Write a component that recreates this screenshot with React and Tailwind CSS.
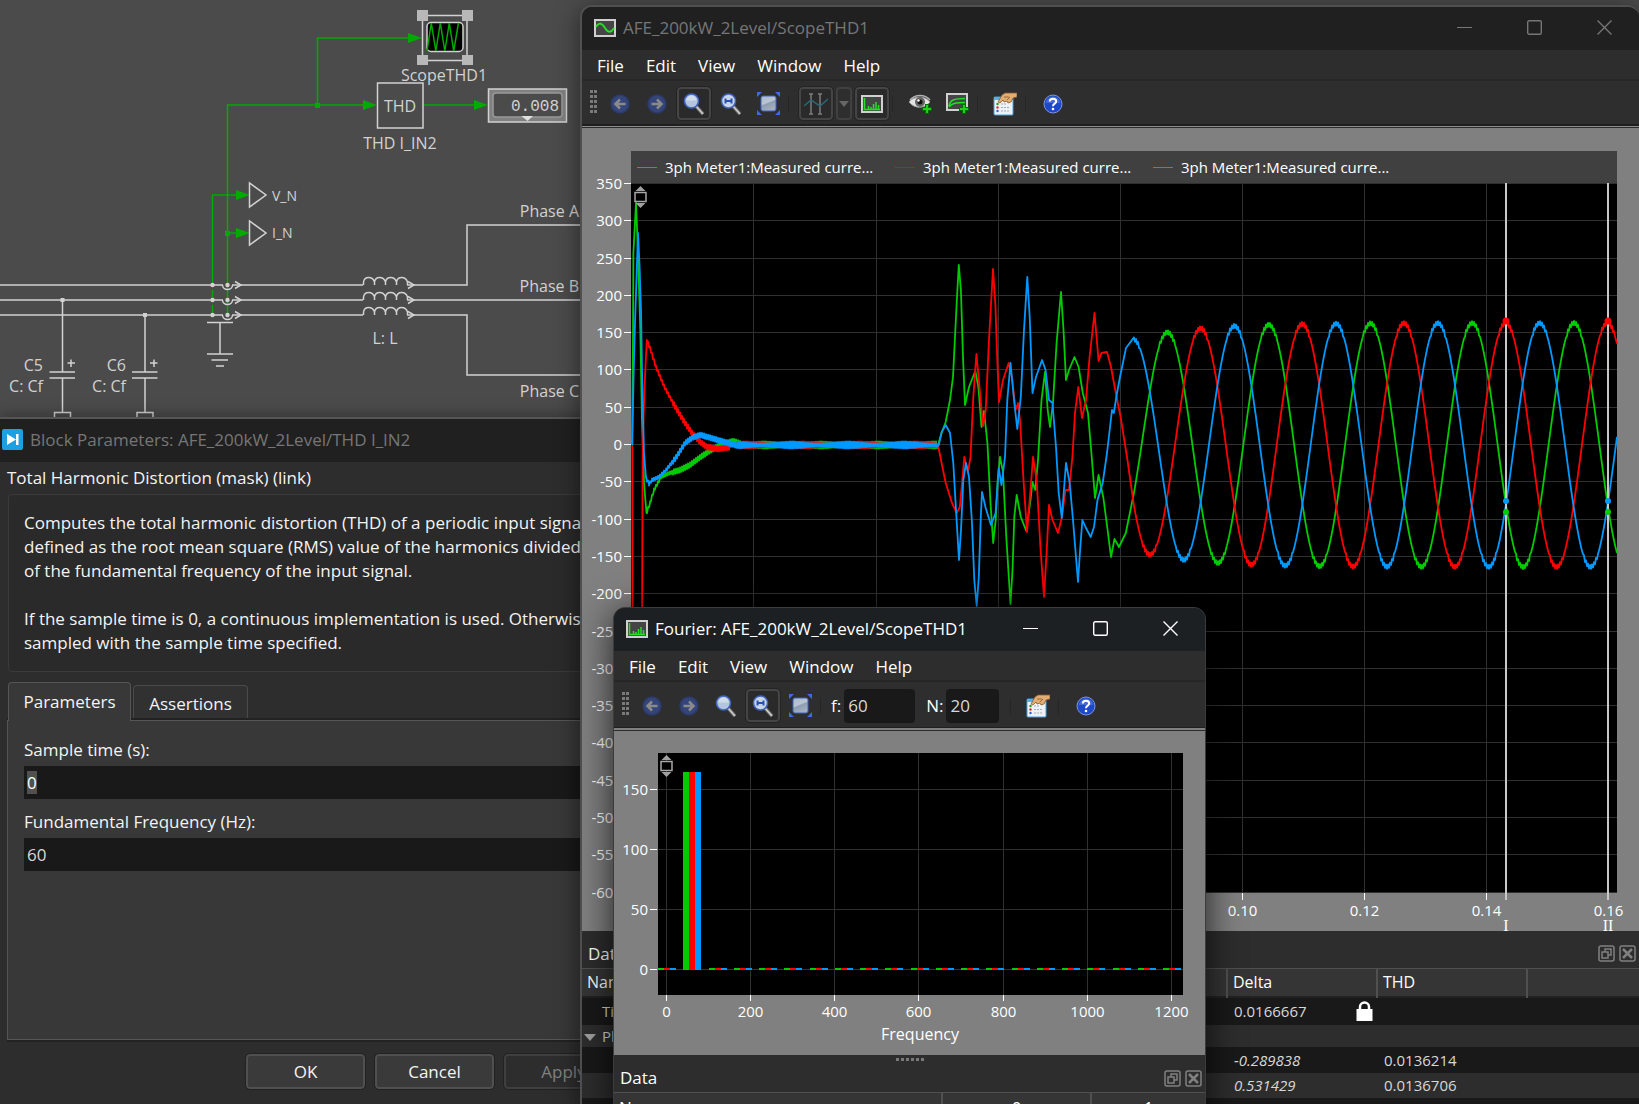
import React, { useEffect, useRef } from 'react';

const GREEN = '#00cc00';
const RED = '#ff0000';
const BLUE = '#0099ff';

// start-up and load step transients, x y pairs
const TRANSIENTS = {
    green: '632 444 633 340 633.4 253 636 203 638 253 640.3 330 642 420 644 483 646.5 513 650 503 654 490 661 477 669.5 473 680 470 690 465 700.5 457 711 450 721 445 733 441 742 444|938 445 941.6 433 945.7 422 950 400 953 377 954.7 343 956.7 303 958.8 265 960.9 290 963 357 965 405 969 387 975.3 371 978.4 387 981.5 427 984 411 987.4 443 990.5 503 993.2 543 995.7 520 997.7 480 1000 457 1003 472 1006.3 537 1010.5 604 1012.5 570 1014.3 517 1016.7 495 1020.8 517 1026.3 531 1030.5 500 1032.5 482 1035.3 490 1038 460 1041.5 400 1045 372 1047.7 410 1050 427 1053 403 1056.6 343 1061 292 1063.5 330 1066 380 1069 370 1074.5 357 1078.6 367 1082.8 393 1088 413 1091.4 453 1095 498 1098.6 475 1103.4 498 1107.6 530 1111 557 1114.5 539 1119 547 1125.8 533',
    red: '632.3 445 632.5 640 638 900 642 640 642.7 443 644.7 383 646.8 340 650 348 656 367 664.4 387 673 403 683 420 692 433 699 441 707 447 718 449 731 447|938 445 941.6 463 945.7 483 952 503 956.7 513 959.8 507 962.3 480 964.3 457 968 472 970.5 457 973.3 397 976.4 354 979.5 387 983 426 985.7 410 989 340 993 269 995.3 303 997.4 363 999 402 1003 380 1008.7 363 1012 377 1015.6 410 1018 403 1020 420 1023.5 480 1027 532 1030.5 490 1033 457 1036.7 480 1040.4 547 1044 597 1046.6 553 1049 505 1052.5 520 1058 533 1062 517 1065.5 490 1069 490 1072.4 457 1075 413 1078.3 387 1082 418 1086 400 1089.6 357 1094.5 313 1098.6 361 1101.4 353 1107 352 1111 367 1115.8 393 1120.6 417 1127 457',
    blue: '632.3 445 633.4 383 635 323 638 233 639.6 267 641 310 642 370 644 453 646 478 649 484 652 480 659 477 666 470 676.4 457 685 443 693.6 437 700.5 435 711 438 724.6 442 738.4 446|938.8 445 941.6 432 945.7 425 950 433 953.3 463 956 510 959 560 961 530 963.3 480 966 463 969 477 972 523 974.3 580 976.7 606 978.8 577 980.8 517 982 492 985.7 508 991 525 995.6 513 998.7 468 1001.5 485 1005 457 1007.3 400 1010.5 363 1014 400 1017.3 429 1020.8 397 1024 330 1027.3 277 1029.7 317 1032.5 393 1036 377 1042 360 1045.6 370 1049 400 1052.5 403 1056 447 1058.7 493 1061.8 518 1066 463 1069.7 483 1073 520 1078 582 1080.3 547 1082.4 520 1085.5 527 1090.7 537 1094 527 1097.5 500 1102.7 483 1107 453 1112 410 1113.8 413 1117 393 1120 377 1126 348',
};

const PEAKS = { green: 1167, red: 1200.4, blue: 1132.6 };
const PERIOD = 101.75;

// switching ripple on the settling part, one sample per pixel
const addRipple = (text) => {
    const n = text.split(' ').map(Number);
    const out = [];
    for (let i = 0; i + 1 < n.length; i += 2) {
        const [x, y, nx, ny] = n.slice(i, i + 4);
        out.push(`${x} ${y}`);
        if (x < 646 || nx === undefined) continue;
        for (let px = Math.ceil(x); px < nx; px += 1) {
            const mid = y + ((ny - y) * (px - x)) / (nx - x);
            const ripple = px > 672 ? 2.5 : 1.5;
            out.push(`${px} ${(mid + (px % 2 ? ripple : -ripple)).toFixed(1)}`);
        }
    }
    return out.join(' ');
};

const buildWave = (name) => {
    const [start, step] = TRANSIENTS[name].split('|');
    const idle = [];
    for (let x = 738; x < 938; x += 1) {
        const swell = 2.5 + Math.sin(x / 9 + PEAKS[name]);
        idle.push(`${x} ${(445 + (x % 2 ? swell : -swell)).toFixed(1)}`);
    }
    const steady = [];
    for (let x = 1134; x <= 1617; x += 1) {
        const c = Math.cos((2 * Math.PI * (x - PEAKS[name])) / PERIOD);
        const amp = 122 - 16 * Math.exp(-(x - 1134) / 60);
        const ripple = Math.abs(c) > 0.9 ? 2 : 0;
        steady.push(`${x} ${(445 - amp * c + (x % 2 ? ripple : -ripple)).toFixed(1)}`);
    }
    return `${addRipple(start)} ${idle.join(' ')} ${step} ${steady.join(' ')}`;
};

const WAVES = [
    { name: 'green', color: GREEN, points: buildWave('green') },
    { name: 'red', color: RED, points: buildWave('red') },
    { name: 'blue', color: BLUE, points: buildWave('blue') },
];

/* ---------- icons ---------- */

const ScopeIcon = () => (
    <svg width="22" height="18" viewBox="0 0 22 18">
        <rect x="1" y="1" width="20" height="16" fill="#454545" stroke="#d0d0d0" strokeWidth="2" />
        <path d="M2 8C5 3 8 4 11 9S17 14 20 9" fill="none" stroke="#22e022" strokeWidth="1.800" />
    </svg>
);

const SpectrumIcon = () => (
    <svg width="22" height="18" viewBox="0 0 22 18">
        <rect x="1" y="1" width="20" height="16" fill="#454545" stroke="#d0d0d0" strokeWidth="2" />
        <path d="M3.500 3V14.500H19M7.500 14V11M10 14V12M12.500 14V9M15 14V7M17.500 14V10" fill="none" stroke="#22e022" strokeWidth="1.500" />
    </svg>
);

const ArrowIcon = ({ flip }) => (
    <svg width="20" height="20" viewBox="0 0 20 20">
        <circle cx="10" cy="10" r="9" fill="#35457a" stroke="#2c3a68" strokeWidth="1.500" />
        <path
            d={flip ? 'M4.500 10H14M10 5.500L14.500 10L10 14.500' : 'M15.500 10H6M10 5.500L5.500 10L10 14.500'}
            fill="none"
            stroke="#8a8a8a"
            strokeWidth="2.500"
        />
    </svg>
);

const ZoomIcon = ({ range }) => (
    <svg width="22" height="24" viewBox="0 0 22 24">
        <path d="M13 14L20 22" stroke="#6a6a6a" strokeWidth="3.500" />
        <path d="M12.500 13.500L20 22" stroke="#d0d0d0" strokeWidth="1.600" />
        <circle cx="8.500" cy="9" r="7" fill={range ? '#c9d6e8' : '#b4c6dc'} stroke="#3f63bb" strokeWidth="1.600" />
        {range ? (
            <path d="M5.500 6.500V11.500M11.500 6.500V11.500M5.500 9H11.500" stroke="#2850b4" strokeWidth="2" />
        ) : (
            <path d="M3.500 8.500A5 5 0 0 1 13.500 8.500Z" fill="#d0dcea" />
        )}
    </svg>
);

const FitIcon = () => (
    <svg width="23" height="23" viewBox="0 0 23 23" className="shrink-0">
        <defs>
            <linearGradient id="fit" x1="0" y1="0" x2="0.400" y2="1">
                <stop offset="0" stopColor="#a9b8cc" />
                <stop offset="0.500" stopColor="#bcc6d2" />
                <stop offset="0.600" stopColor="#8f9db2" />
                <stop offset="1" stopColor="#a4b0c0" />
            </linearGradient>
        </defs>
        <rect x="4" y="4" width="15" height="15" rx="2" fill="url(#fit)" stroke="#3f63bb" />
        <path d="M0 0H5L0 5ZM23 0H18L23 5ZM0 23H5L0 18ZM23 23H18L23 18Z" fill="#3d6be8" />
    </svg>
);

const CursorsIcon = () => (
    <svg width="24" height="22" viewBox="0 0 24 22">
        <path d="M5 1H9M5 21H9M7 1V21M14 1H18M14 21H18M16 1V21" stroke="#7d7d7d" strokeWidth="1.500" fill="none" />
        <path d="M0 13L7 7L16 13L24 6" stroke="#2b6674" strokeWidth="1.500" fill="none" />
    </svg>
);

const EyeIcon = () => (
    <svg width="25" height="20" viewBox="0 0 25 20">
        <path d="M1 8C5 2 17 1 22 8C17 15 6 15 1 8Z" fill="#e4e4e4" stroke="#9a9a9a" />
        <path d="M2 6C7 0 17 0 22 6" stroke="#b0b0b0" strokeWidth="1.500" fill="none" />
        <circle cx="12" cy="8" r="5" fill="#666" />
        <circle cx="12" cy="8" r="2.500" fill="#111" />
        <circle cx="10.500" cy="6.500" r="1.200" fill="#fff" />
        <path d="M19 10V20M14 15H24" stroke="#046a04" strokeWidth="4" />
        <path d="M19 11V19M15 15H23" stroke="#1fd01f" strokeWidth="2" />
    </svg>
);

const AddTraceIcon = () => (
    <svg width="23" height="21" viewBox="0 0 23 21">
        <rect x="1" y="1" width="20" height="16" fill="#454545" stroke="#d0d0d0" strokeWidth="2" />
        <path d="M3 13C4 7 8 5.500 19 5.500M3 14C6 10 10 9.500 19 9.500" fill="none" stroke="#22e022" strokeWidth="1.500" />
        <path d="M18 11V21M13 16H23" stroke="#046a04" strokeWidth="4" />
        <path d="M18 12V20M14 16H22" stroke="#1fd01f" strokeWidth="2" />
    </svg>
);

const PropertiesIcon = () => (
    <svg width="24" height="24" viewBox="0 0 24 24">
        <rect x="1" y="5" width="19" height="18" rx="1" fill="#eef2f6" stroke="#4aa0d8" />
        <rect x="1" y="5" width="19" height="3" fill="#59aee4" />
        <circle cx="4.500" cy="12" r="1.200" fill="#1b9c1b" />
        <circle cx="4.500" cy="15.500" r="1.200" fill="#d83030" />
        <circle cx="4.500" cy="19" r="1.200" fill="#3060d8" />
        <path d="M8 12H13M8 15.500H17M8 19H16" stroke="#a5adb8" strokeDasharray="2 1" />
        <path d="M5 10L9 3L12 1H20L24 1V5L20 6L18 10L15 11L14 9L11 10L10 8L7 11Z" fill="#e0ad74" stroke="#8a5a2c" strokeWidth="0.800" />
        <path d="M11 5H16M14 8L17 5" stroke="#8a5a2c" strokeWidth="0.800" />
    </svg>
);

const HelpIcon = () => (
    <svg width="20" height="20" viewBox="0 0 20 20">
        <circle cx="10" cy="10" r="9" fill="#1d49c8" stroke="#7f96dc" strokeWidth="1" />
        <path d="M3 9A7 6.500 0 0 1 17 9Z" fill="#5578dc" opacity="0.700" />
        <path d="M6.800 7.500C6.800 3.800 13.200 3.800 13.200 7.500C13.200 9.800 10 9.600 10 12.200" fill="none" stroke="#fff" strokeWidth="2" />
        <circle cx="10" cy="15" r="1.300" fill="#fff" />
    </svg>
);

const FloatIcon = () => (
    <svg width="17" height="17" viewBox="0 0 17 17" fill="none" stroke="#808080" strokeWidth="1.500">
        <rect x="1" y="1" width="15" height="15" rx="2" />
        <rect x="4" y="7" width="6" height="6" />
        <path d="M7 7V4H13V10H10" />
    </svg>
);

const DockCloseIcon = () => (
    <svg width="17" height="17" viewBox="0 0 17 17" fill="none" stroke="#808080" strokeWidth="1.500">
        <rect x="1" y="1" width="15" height="15" rx="2" />
        <path d="M4 4L13 13M13 4L4 13" strokeWidth="2.500" />
    </svg>
);

/* ---------- shared window parts ---------- */

const TitleBar = ({ icon, title, className }) => (
    <div className={`flex h-[43px] shrink-0 items-center pb-[2px] pl-3 ${className}`}>
        {icon}
        <span className="ml-[7px] grow whitespace-nowrap">{title}</span>
        <button aria-label="Minimize" className="flex h-full w-[70px] items-center justify-center">
            <svg width="15" height="15"><path d="M0 7.500H15" stroke="currentColor" /></svg>
        </button>
        <button aria-label="Maximize" className="flex h-full w-[70px] items-center justify-center">
            <svg width="15" height="15"><rect x="0.700" y="0.700" width="13.600" height="13.600" rx="1.500" fill="none" stroke="currentColor" strokeWidth="1.400" /></svg>
        </button>
        <button aria-label="Close" className="flex h-full w-[70px] items-center justify-center">
            <svg width="15" height="15"><path d="M0.500 0.500L14.500 14.500M14.500 0.500L0.500 14.500" stroke="currentColor" strokeWidth="1.400" /></svg>
        </button>
    </div>
);

const MenuBar = () => (
    <div className="flex h-[31px] shrink-0 items-center gap-[22px] border-b-2 border-[#272727] bg-[#2d2d2d] pt-[2px] pl-[15px] text-white">
        {['File', 'Edit', 'View', 'Window', 'Help'].map((item) => (
            <button key={item}>{item}</button>
        ))}
    </div>
);

const Grip = () => (
    <svg width="8" height="27" className="mr-[2px] shrink-0" fill="#7a7a7a">
        {[0, 5, 10, 15, 20].map((y) => (
            <path key={y} d={`M0 ${y}h3v3h-3zM4 ${y}h3v3h-3z`} />
        ))}
    </svg>
);

const ToolButton = ({ label, active, children }) => (
    <button
        aria-label={label}
        className={`flex h-[33px] w-[34px] shrink-0 items-center justify-center rounded-sm border-2 ${active ? 'border-[#454545] bg-[#2a2a2a] outline outline-[#242424]' : 'border-transparent'}`}
    >
        {children}
    </button>
);

const Separator = () => <div className="h-4 w-2 shrink-0 border-l border-[#262626]" />;

const DockTitle = ({ className }) => (
    <div className={`flex shrink-0 items-center bg-[#2d2d2d] pl-[6px] text-white ${className}`}>
        <span className="grow">Data</span>
        <button aria-label="Float panel" className="mr-1"><FloatIcon /></button>
        <button aria-label="Close panel" className="mr-[3px]"><DockCloseIcon /></button>
    </div>
);

const ZoomHandle = ({ x, y }) => (
    <g transform={`translate(${x} ${y})`}>
        <path d="M-5 -6L0 -11L5 -6ZM-5 6L0 11L5 6Z" fill="#a0a0a0" />
        <rect x="-5.500" y="-4.500" width="11" height="9" fill="#000" stroke="#a8a8a8" strokeWidth="1.500" />
    </g>
);

/* ---------- schematic editor ---------- */

const Schematic = () => (
    <svg width="660" height="420" className="block" fontSize="16" fill="none" stroke="#d2d2d2" strokeWidth="1.500">
        <g stroke="#00aa00">
            <path d="M227.500 315V105H364M317.500 105V38H409M423 105H475M212.500 285V195H237M227.500 233H237" />
            <path d="M212.500 290V315" strokeDasharray="9 6" />
            <g fill="#00aa00" stroke="none">
                <path d="M363 100L377 105L363 110ZM408 33L422 38L408 43ZM474 100L488 105L474 110ZM236 190L250 195L236 200ZM236 228L250 233L236 238Z" />
                <path d="M315 103h5v5h-5zM225 231h5v5h-5z" />
            </g>
        </g>
        <path d="M0 285H363M0 300H363M0 315H363" />
        <path d="M407 285H467V225H590M407 300H590M407 315H467V375H590" />
        {[285, 300, 315].map((y) => (
            <g key={y}>
                <path d={`M363.500 ${y}v-3c1-6 9-6 11 0v3v-3c1-6 9-6 11 0v3v-3c1-6 9-6 11 0v3v-3c1-6 9-6 11 0v3`} />
                <path d={`M408 ${y - 3.5}L414 ${y}L408 ${y + 3.5}M235 ${y - 3.5}L241 ${y}L235 ${y + 3.5}`} />
                <path d={`M223 ${y}H232`} stroke="#4b4b4b" strokeWidth="3" />
                <path d={`M222.500 ${y}A5 4.500 0 0 0 232.500 ${y}`} />
                <circle cx="212.500" cy={y} r="2.200" fill="#d2d2d2" stroke="none" />
                <circle cx="227.500" cy={y} r="2.200" fill="#d2d2d2" stroke="none" />
            </g>
        ))}
        <path d="M207 322.500H233M220 322V354M207 354H233M211.500 360H228M216 366H224" />
        <path d="M249.500 183V207L266 195ZM249.500 221V245L266 233Z" />
        <path d="M62.500 300V372M49.500 372H75M49.500 378H75M62.500 378V412M54.500 420V412.500H70.500V420" />
        <path d="M145 315V372M132 372H157.500M132 378H157.500M145 378V412M137 420V412.500H153V420" />
        <path d="M60.500 298h4v4h-4zM143 313h4v4h-4z" fill="#d2d2d2" stroke="none" />
        <path d="M67.500 363H75M71 359.500V367M150 363H157.500M154 359.500V367" />
        <rect x="377.500" y="83" width="45.500" height="45" />
        <rect x="488.500" y="89" width="78" height="33" fill="#808080" />
        <rect x="493" y="93" width="69" height="24" rx="3" fill="#4b4b4b" stroke="#999" />
        <path d="M521.500 116H533L527.500 121Z" fill="#e0e0e0" stroke="none" />
        <rect x="422.500" y="15.500" width="44.500" height="45" />
        <path d="M417 10h11v11h-11zM462 10h11v11h-11zM417 55h11v10h-11zM462 55h11v10h-11z" fill="#b8b8b8" stroke="none" />
        <rect x="427" y="22.500" width="36" height="29" rx="4" fill="#000" />
        <path d="M427 51L431.300 23L435.800 51L440.300 23L444.800 51L449.300 23L453.700 51L458.500 23" stroke="#00aa00" />
        <g fill="#d2d2d2" stroke="none">
            <text x="444" y="81" textAnchor="middle">ScopeTHD1</text>
            <text x="400" y="112" textAnchor="middle">THD</text>
            <text x="400" y="149" textAnchor="middle">THD I_IN2</text>
            <text x="559" y="111" textAnchor="end" fontFamily="Liberation Mono, monospace">0.008</text>
            <text x="272" y="201" fontSize="14">V_N</text>
            <text x="272" y="238" fontSize="14">I_N</text>
            <text x="579" y="217" textAnchor="end">Phase A</text>
            <text x="579" y="292" textAnchor="end">Phase B</text>
            <text x="579" y="397" textAnchor="end">Phase C</text>
            <text x="385" y="344" textAnchor="middle">L: L</text>
            <text x="43" y="371" textAnchor="end">C5</text>
            <text x="43" y="392" textAnchor="end">C: Cf</text>
            <text x="126" y="371" textAnchor="end">C6</text>
            <text x="126" y="392" textAnchor="end">C: Cf</text>
        </g>
    </svg>
);

/* ---------- block parameters dialog ---------- */

const dialogButton = 'h-[35px] w-[119px] rounded-sm border-2 outline outline-[#222]';

const BlockParameters = () => {
    const sampleTime = useRef(null);

    useEffect(() => {
        sampleTime.current.focus();
        sampleTime.current.select();
    }, []);

    return (
        <section className="absolute top-[417px] bottom-0 left-0 flex w-[635px] flex-col border-t-2 border-[#555] bg-[#2d2d2d] text-[#f4f4f4] shadow-[0_0_16px_rgba(0,0,0,0.4)]">
            <div className="flex h-[43px] shrink-0 items-center bg-[#202020] pb-[2px] pl-[2px] text-[#767676]">
                <svg width="21" height="21">
                    <rect width="21" height="21" rx="2" fill="#1ba1e2" />
                    <path d="M5 5L14 10.500L5 16ZM14 5H16.500V16H14Z" fill="#fff" />
                </svg>
                <span className="ml-[7px] whitespace-nowrap">Block Parameters: AFE_200kW_2Level/THD I_IN2</span>
            </div>
            <h2 className="mt-1 ml-[7px]">Total Harmonic Distortion (mask) (link)</h2>
            <div className="mt-1 ml-2 h-[178px] shrink-0 rounded-sm border border-[#3a3a3a] bg-[#2a2a2a] px-[15px] pt-4 whitespace-nowrap">
                <p>Computes the total harmonic distortion (THD) of a periodic input signal</p>
                <p>defined as the root mean square (RMS) value of the harmonics divided</p>
                <p>of the fundamental frequency of the input signal.</p>
                <p className="mt-6">If the sample time is 0, a continuous implementation is used. Otherwise</p>
                <p>sampled with the sample time specified.</p>
            </div>
            <div className="mt-[10px] ml-2 flex shrink-0 items-end" role="tablist">
                <button role="tab" aria-selected="true" className="z-10 -mb-px h-[39px] w-[123px] rounded-t-sm border border-b-0 border-[#555] bg-[#383838]">Parameters</button>
                <button role="tab" className="ml-[2px] h-[35px] w-[115px] rounded-t-sm border border-b-0 border-[#4a4a4a] bg-[#313131] pt-[2px]">Assertions</button>
            </div>
            <div className="ml-[7px] flex h-[320px] shrink-0 flex-col border border-r-0 border-[#555] bg-[#383838] pt-[17px] pl-4 shadow-[0_-2px_0_#222,0_2px_0_#222]">
                <label htmlFor="sample">Sample time (s):</label>
                <input
                    id="sample"
                    ref={sampleTime}
                    defaultValue="0"
                    className="mt-1 h-[33px] bg-[#191919] px-[3px] outline-none selection:bg-[#505050] selection:text-white"
                />
                <label htmlFor="fundamental" className="mt-[11px]">Fundamental Frequency (Hz):</label>
                <input id="fundamental" defaultValue="60" className="mt-1 h-[33px] bg-[#191919] px-[3px] text-[#d8d8d8] outline-none" />
            </div>
            <div className="mt-[14px] flex justify-end gap-[10px] pr-3">
                <button className={`${dialogButton} border-[#505050] bg-[#3a3a3a]`}>OK</button>
                <button className={`${dialogButton} border-[#505050] bg-[#3a3a3a]`}>Cancel</button>
                <button disabled className={`${dialogButton} border-[#3f3f3f] bg-[#2d2d2d] text-[#808080]`}>Apply</button>
            </div>
        </section>
    );
};

/* ---------- scope ---------- */

const Y_TICKS = Array.from({ length: 20 }, (_, i) => 350 - i * 50);
const X_TICKS = [0.02, 0.04, 0.06, 0.08, 0.1, 0.12, 0.14, 0.16];
const scopeY = (v) => Math.round(445 - v * 0.746) - 0.5;
const scopeX = (t) => Math.round(631.3 + t * 6105) + 0.5;

const ScopePlot = () => (
    <svg viewBox="582 183 1057 748" className="block w-full overflow-visible" fontSize="15" fill="#fff">
        <rect x="631" y="183" width="986" height="710" fill="#000" />
        <g stroke="#303030" shapeRendering="crispEdges">
            {Y_TICKS.map((v) => <path key={v} d={`M631 ${scopeY(v)}H1617`} />)}
            {X_TICKS.slice(0, 7).map((t) => <path key={t} d={`M${scopeX(t)} 183V892`} />)}
        </g>
        <g fill="none" strokeWidth="1.800" strokeLinejoin="round">
            {WAVES.map((w) => <polyline key={w.name} points={w.points} stroke={w.color} />)}
        </g>
        <g stroke="#fff">
            {Y_TICKS.map((v) => <path key={v} d={`M624 ${scopeY(v)}H631`} />)}
            {X_TICKS.map((t) => <path key={t} d={`M${scopeX(t)} 893V900`} />)}
        </g>
        {Y_TICKS.map((v) => <text key={v} x="622" y={scopeY(v) + 5.5} textAnchor="end">{v}</text>)}
        {X_TICKS.map((t) => <text key={t} x={scopeX(t)} y="916" textAnchor="middle">{t.toFixed(2)}</text>)}
        {[1506, 1608].map((x) => (
            <g key={x}>
                <path d={`M${x} 183V900`} stroke="#c8c8c8" strokeWidth="2" />
                <circle cx={x} cy="321" r="3.500" fill={RED} />
                <circle cx={x} cy="501" r="3" fill={BLUE} />
                <circle cx={x} cy="512" r="3" fill={GREEN} />
            </g>
        ))}
        <g fontFamily="Liberation Serif, serif" fontSize="16" textAnchor="middle">
            <text x="1506" y="931">I</text>
            <text x="1608" y="931">II</text>
        </g>
        <ZoomHandle x={640.5} y={197} />
    </svg>
);

const Lock = () => (
    <svg width="17" height="20">
        <path d="M4 9V6A4.500 4.500 0 0 1 13 6V9" fill="none" stroke="#fff" strokeWidth="2.500" />
        <rect x="0.500" y="8" width="16" height="12" fill="#fff" />
    </svg>
);

const headCell = 'border-r-2 border-[#505050] p-0 pl-[5px] text-left font-normal';

const ScopeWindow = () => (
    <section className="absolute top-[5px] right-0 -bottom-1 left-[580px] flex flex-col overflow-hidden rounded-t-xl border-t-2 border-l-2 border-[#505050] bg-[#191919] shadow-[0_4px_24px_rgba(0,0,0,0.5)]">
        <TitleBar icon={<ScopeIcon />} title="AFE_200kW_2Level/ScopeTHD1" className="bg-[#202020] text-[#767676]" />
        <MenuBar />
        <div className="flex h-[43px] shrink-0 items-center gap-[3px] bg-[#2e2e2e] pt-[2px] pl-2">
            <Grip />
            <ToolButton label="Back"><ArrowIcon /></ToolButton>
            <ToolButton label="Forward"><ArrowIcon flip /></ToolButton>
            <ToolButton label="Free zoom" active><ZoomIcon /></ToolButton>
            <ToolButton label="Constrained zoom"><ZoomIcon range /></ToolButton>
            <ToolButton label="Zoom to fit"><FitIcon /></ToolButton>
            <Separator />
            <ToolButton label="Cursors" active><CursorsIcon /></ToolButton>
            <button aria-label="Cursor options" className="flex h-[33px] w-4 items-center justify-center rounded-sm border-2 border-[#404040]">
                <svg width="10" height="6" className="shrink-0"><path d="M0 0H10L5 6Z" fill="#666" /></svg>
            </button>
            <ToolButton label="Fourier spectrum" active><SpectrumIcon /></ToolButton>
            <Separator />
            <ToolButton label="Show traces"><EyeIcon /></ToolButton>
            <ToolButton label="Hold trace"><AddTraceIcon /></ToolButton>
            <Separator />
            <ToolButton label="Properties"><PropertiesIcon /></ToolButton>
            <Separator />
            <ToolButton label="Help"><HelpIcon /></ToolButton>
        </div>
        <div className="h-[4px] shrink-0 border-t-2 border-b border-t-[#1f1f1f] border-b-[#2d2d2d] bg-[#8c8c8c]" />
        <div className="shrink-0 bg-[#808080] pt-[23px]">
            <div className="mr-[22px] ml-[49px] flex h-8 items-center gap-4 bg-[#404040] pl-[6px] text-[15px] text-white">
                {WAVES.map((w) => (
                    <div key={w.name} className="flex w-[242px] items-center gap-2 whitespace-nowrap">
                        <svg width="20" height="1" className="shrink-0"><rect width="20" height="1" fill={w.color} /></svg>
                        3ph Meter1:Measured curre...
                    </div>
                ))}
            </div>
            <ScopePlot />
        </div>
        <DockTitle className="h-[37px] pt-2" />
        <table className="w-full table-fixed border-collapse text-[15px] text-[#d8d8d8]">
            <thead>
                <tr className="h-7 border-t border-b-2 border-t-[#505050] border-b-[#222] bg-[#353535] text-[16px] text-white">
                    <th className={`${headCell} w-[349px]`}>Name</th>
                    <th className={`${headCell} w-[148px]`} />
                    <th className={`${headCell} w-[148px]`} />
                    <th className={`${headCell} w-[150px]`}>Delta</th>
                    <th className={`${headCell} w-[150px]`}>THD</th>
                    <th />
                </tr>
            </thead>
            <tbody>
                <tr className="h-7 bg-[#191919]">
                    <td className="pl-5" colSpan="3">Time</td>
                    <td className="pl-[7px]">
                        <div className="flex items-center justify-between pr-1">
                            0.0166667
                            <Lock />
                        </div>
                    </td>
                    <td colSpan="2" />
                </tr>
                <tr className="h-[22px] bg-[#2d2d2d] leading-[22px]">
                    <td colSpan="6" className="pl-[2px]">
                        <svg width="12" height="7" className="mr-[6px] inline"><path d="M0 0H12L6 7Z" fill="#a0a0a0" /></svg>
                        Plot
                    </td>
                </tr>
                <tr className="h-[26px] bg-[#191919]">
                    <td colSpan="3" />
                    <td className="pl-[7px] italic">-0.289838</td>
                    <td className="pl-[7px]">0.0136214</td>
                    <td />
                </tr>
                <tr className="h-[25px] bg-[#2d2d2d]">
                    <td colSpan="3" />
                    <td className="pl-[7px] italic">0.531429</td>
                    <td className="pl-[7px]">0.0136706</td>
                    <td />
                </tr>
            </tbody>
        </table>
    </section>
);

/* ---------- fourier ---------- */

const freqX = (f) => Math.round(666 + f * 0.4208) + 0.5;
const FREQS = [0, 200, 400, 600, 800, 1000, 1200];
const MAGS = [
    { value: 150, y: 789.5 },
    { value: 100, y: 849.5 },
    { value: 50, y: 909.5 },
    { value: 0, y: 969.5 },
];

const FourierPlot = () => (
    <svg viewBox="614 731 591 324" className="block w-full shrink-0 bg-[#808080]" fontSize="15" fill="#fff">
        <rect x="658" y="753" width="525" height="242" fill="#000" />
        <g stroke="#303030">
            {MAGS.map((m) => <path key={m.value} d={`M658 ${m.y}H1183`} />)}
            {FREQS.map((f) => <path key={f} d={`M${freqX(f)} 753V995`} />)}
        </g>
        {Array.from({ length: 21 }, (_, n) => {
            const x = Math.round(666 + n * 25.25) - 8;
            const top = n === 1 ? 772 : 968;
            return (
                <g key={n} shapeRendering="crispEdges">
                    <rect x={x} y={top} width="6" height={970 - top} fill={GREEN} />
                    <rect x={x + 6} y={top} width="6" height={970 - top} fill={RED} />
                    <rect x={x + 12} y={top} width="6" height={970 - top} fill={BLUE} />
                </g>
            );
        })}
        <g stroke="#fff">
            {MAGS.map((m) => <path key={m.value} d={`M650 ${m.y}H657`} />)}
            {FREQS.map((f) => <path key={f} d={`M${freqX(f)} 995V1001`} />)}
        </g>
        {MAGS.map((m) => <text key={m.value} x="648" y={m.y + 5.5} textAnchor="end">{m.value}</text>)}
        {FREQS.map((f) => <text key={f} x={freqX(f)} y="1017" textAnchor="middle">{f}</text>)}
        <text x="920" y="1040" textAnchor="middle" fontSize="16">Frequency</text>
        <ZoomHandle x={666.5} y={766} />
    </svg>
);

const FourierWindow = () => (
    <section className="absolute top-[607px] -bottom-4 left-[613px] flex w-[593px] flex-col overflow-hidden rounded-t-xl border border-[#3c3c3c] bg-[#2d2d2d] shadow-[0_6px_36px_rgba(0,0,0,0.75)]">
        <TitleBar icon={<SpectrumIcon />} title="Fourier: AFE_200kW_2Level/ScopeTHD1" className="bg-[#1c2022] text-white" />
        <MenuBar />
        <div className="flex h-[45px] shrink-0 items-center gap-[3px] bg-[#2e2e2e] pt-[2px] pl-2 text-white">
            <Grip />
            <ToolButton label="Back"><ArrowIcon /></ToolButton>
            <ToolButton label="Forward"><ArrowIcon flip /></ToolButton>
            <ToolButton label="Free zoom"><ZoomIcon /></ToolButton>
            <ToolButton label="Constrained zoom" active><ZoomIcon range /></ToolButton>
            <ToolButton label="Zoom to fit"><FitIcon /></ToolButton>
            <Separator />
            <label htmlFor="base">f:</label>
            <input id="base" defaultValue="60" className="h-[34px] w-[71px] rounded-sm bg-[#191919] px-1 text-[#d8d8d8]" />
            <label htmlFor="count" className="ml-2">N:</label>
            <input id="count" defaultValue="20" className="mr-2 h-[34px] w-[53px] rounded-sm bg-[#191919] px-1 text-[#d8d8d8]" />
            <Separator />
            <ToolButton label="Properties"><PropertiesIcon /></ToolButton>
            <Separator />
            <ToolButton label="Help"><HelpIcon /></ToolButton>
        </div>
        <div className="h-1 shrink-0 border-t border-b border-t-[#1f1f1f] border-b-[#2d2d2d] bg-[#808080]" />
        <FourierPlot />
        <div className="flex h-[6px] shrink-0 items-end justify-center gap-[2px]">
            {[0, 1, 2, 3, 4, 5].map((i) => <span key={i} className="size-[3px] bg-[#7a7a7a]" />)}
        </div>
        <DockTitle className="h-[31px] pt-[3px]" />
        <table className="w-full table-fixed border-collapse text-white">
            <thead>
                <tr className="h-[30px] border-t border-[#505050] bg-[#353535]">
                    <th className={`${headCell} w-[328px]`}>Name</th>
                    <th className="w-[149px] border-r-2 border-[#505050] font-normal">0</th>
                    <th className="font-normal">1</th>
                </tr>
            </thead>
        </table>
    </section>
);

const App = () => (
    <main className="relative h-screen w-full overflow-hidden bg-[#4b4b4b] font-['Open_Sans',sans-serif] text-[17px] leading-6">
        <Schematic />
        <BlockParameters />
        <ScopeWindow />
        <FourierWindow />
    </main>
);

export default App;
